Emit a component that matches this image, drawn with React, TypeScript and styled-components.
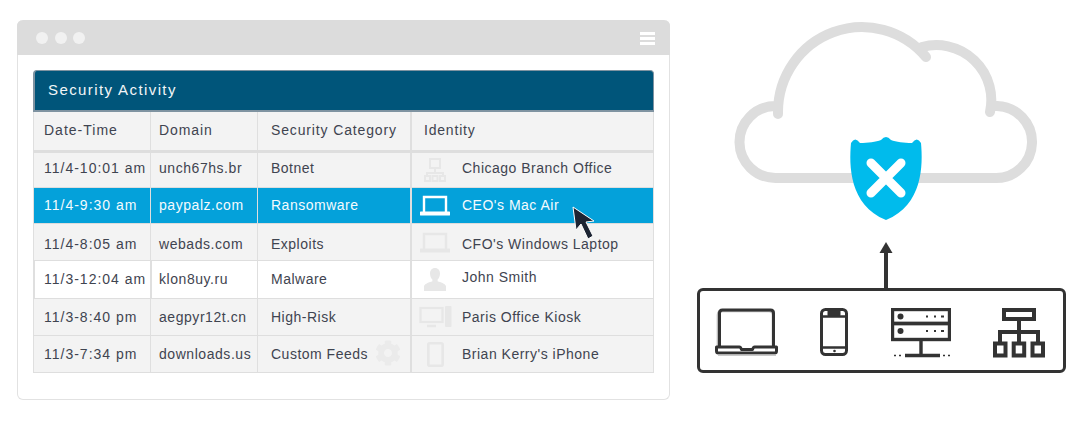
import React from 'react';
import styled, { createGlobalStyle } from 'styled-components';
import { FaCog } from 'react-icons/fa';

const GlobalStyle = createGlobalStyle`
  html, body {
    margin: 0;
    padding: 0;
    background: #fff;
    font-family: 'Liberation Sans', Arial, sans-serif;
  }
`;

type IconKind = 'network' | 'laptop' | 'person' | 'kiosk' | 'phone';

type ActivityRow = {
  time: string;
  domain: string;
  category: string;
  identity: string;
  icon: IconKind;
  height: number;
  nudge?: number;
  selected?: boolean;
  white?: boolean;
  gear?: boolean;
};

const rows: ActivityRow[] = [
  { time: '11/4-10:01 am', domain: 'unch67hs.br', category: 'Botnet', identity: 'Chicago Branch Office', icon: 'network', height: 35, nudge: -4 },
  { time: '11/4-9:30 am', domain: 'paypalz.com', category: 'Ransomware', identity: "CEO's Mac Air", icon: 'laptop', height: 36, nudge: -2, selected: true },
  { time: '11/4-8:05 am', domain: 'webads.com', category: 'Exploits', identity: "CFO's Windows Laptop", icon: 'laptop', height: 37, nudge: 3 },
  { time: '11/3-12:04 am', domain: 'klon8uy.ru', category: 'Malware', identity: 'John Smith', icon: 'person', height: 38, nudge: -2, white: true },
  { time: '11/3-8:40 pm', domain: 'aegpyr12t.cn', category: 'High-Risk', identity: 'Paris Office Kiosk', icon: 'kiosk', height: 37 },
  { time: '11/3-7:34 pm', domain: 'downloads.us', category: 'Custom Feeds', identity: "Brian Kerry's iPhone", icon: 'phone', height: 37, gear: true },
];

const Page = styled.div`
  display: flex;
  align-items: flex-start;
  width: 1083px;
  height: 424px;
  padding: 20px 0 0 17px;
  box-sizing: border-box;
  overflow: hidden;
`;

const BrowserWindow = styled.section`
  width: 653px;
  height: 380px;
  box-sizing: border-box;
  border: 1px solid #e2e2e2;
  border-top: none;
  border-radius: 6px;
  background: #fff;
`;

const TitleBar = styled.div`
  display: flex;
  align-items: center;
  height: 35px;
  margin: 0 -1px;
  padding: 0 15px 0 19px;
  background: #dcdcdc;
  border-radius: 6px 6px 0 0;
`;

const Dot = styled.span`
  width: 12px;
  height: 12px;
  margin-right: 6.5px;
  border-radius: 50%;
  background: #f1f1f1;
`;

const Burger = styled.span`
  display: flex;
  flex-direction: column;
  gap: 2px;
  margin: 2px 0 0 auto;

  i {
    width: 15px;
    height: 3px;
    background: #fff;
  }
`;

const Panel = styled.div`
  position: relative;
  width: 621px;
  margin: 15px 0 0 15px;
`;

const PanelTitle = styled.h2`
  height: 42px;
  margin: 0;
  box-sizing: border-box;
  padding: 0 0 0 13px;
  border: 2px solid #7f93a1;
  border-width: 1px 1px 2px 2px;
  border-radius: 4px 4px 0 0;
  background: #00557a;
  color: #f2f5f7;
  font-size: 15px;
  font-weight: 400;
  line-height: 38px;
  letter-spacing: 1.4px;
`;

const Row = styled.div<{ $height: number; $selected?: boolean; $white?: boolean; $head?: boolean }>`
  display: grid;
  grid-template-columns: 117px 107px 153px 244px;
  height: ${(p) => p.$height}px;
  box-sizing: border-box;
  border-bottom: ${(p) => (p.$head ? 3 : 1)}px solid ${(p) => (p.$selected ? '#dcdcdc' : '#dedede')};
  background: ${(p) => (p.$selected ? '#04a1da' : p.$white ? '#fff' : '#f3f3f3')};
  color: ${(p) => (p.$selected ? '#f4fbfe' : '#3f4450')};
  font-size: 14px;
`;

const Cell = styled.div<{ $inset: number; $thick?: boolean; $spacing: number }>`
  display: flex;
  align-items: center;
  position: relative;
  box-sizing: border-box;
  padding-left: ${(p) => p.$inset}px;
  border-left: ${(p) => (p.$thick ? 2 : 1)}px solid #dfdfdf;
  letter-spacing: ${(p) => p.$spacing}px;
  white-space: nowrap;
`;

const LastCell = styled(Cell)`
  border-right: 1px solid #dfdfdf;
`;

// a margin inside a centred flex cell moves the text by half its value
const Label = styled.span<{ $nudge?: number }>`
  margin-top: ${(p) => p.$nudge || 0}px;
`;

const IconSlot = styled.span<{ $selected?: boolean }>`
  display: flex;
  flex: none;
  justify-content: center;
  width: 46px;
  margin-right: 4px;
  color: ${(p) => (p.$selected ? '#fff' : '#e7e7e7')};
`;

const Gear = styled(FaCog)`
  position: absolute;
  right: 9px;
  top: 4px;
  color: #ebebeb;
  font-size: 26px;
`;

const Cursor = styled.svg`
  position: absolute;
  left: 539px;
  top: 136px;
`;

const Diagram = styled.div`
  display: flex;
  flex-direction: column;
  width: 369px;
  margin-left: 27px;
`;

const CloudArt = styled.svg`
  display: block;
  margin-left: 33px;
`;

const DeviceBox = styled.div`
  display: flex;
  align-items: flex-start;
  gap: 42px;
  height: 85px;
  box-sizing: border-box;
  padding: 17px 0 0 15px;
  border: 3px solid #333;
  border-radius: 6px;
  color: #333;
`;

const IdentityIcon = ({ kind }: { kind: IconKind }) => {
  if (kind === 'network') {
    return (
      <svg width="22" height="24" viewBox="0 0 22 24" fill="none" stroke="currentColor" strokeWidth="2">
        <rect x="6" y="1" width="10" height="9" />
        <path d="M11 10v5M3 18v-3h16v3" />
        <rect x="1" y="18" width="5" height="5" />
        <rect x="8.5" y="18" width="5" height="5" />
        <rect x="16" y="18" width="5" height="5" />
      </svg>
    );
  }
  if (kind === 'laptop') {
    return (
      <svg width="30" height="21" viewBox="0 0 30 21" fill="none" stroke="currentColor" strokeWidth="2.4">
        <path d="M4 17V2h22v15" />
        <path d="M1 18.5h28" strokeWidth="4" strokeLinecap="round" />
      </svg>
    );
  }
  if (kind === 'person') {
    return (
      <svg width="22" height="23" viewBox="0 0 22 23" fill="currentColor">
        <path d="M11 0c3.2 0 5 2.4 5 5.6 0 2.6-1 4.8-2.4 6v1.6c3 1 7.4 2.2 8.4 4.8V23H0v-5c1-2.6 5.4-3.8 8.4-4.8v-1.6C7 10.4 6 8.2 6 5.6 6 2.4 7.8 0 11 0z" />
      </svg>
    );
  }
  if (kind === 'kiosk') {
    return (
      <svg width="33" height="22" viewBox="0 0 33 22" fill="none" stroke="currentColor" strokeWidth="2.2">
        <rect x="1.5" y="2" width="22" height="14" />
        <path d="M8 20h9" strokeWidth="2.5" />
        <rect x="26" y="0" width="6.5" height="21" rx="1" fill="currentColor" stroke="none" />
      </svg>
    );
  }
  return (
    <svg width="17" height="25" viewBox="0 0 17 25" fill="none" stroke="currentColor" strokeWidth="2.6">
      <rect x="1.3" y="1.3" width="14.4" height="22.4" rx="1.5" />
    </svg>
  );
};

const LaptopIcon = () => (
  <svg width="63" height="48" viewBox="0 0 63 48" fill="none" stroke="currentColor">
    <path d="M4 38V6q0-4 4-4h47q4 0 4 4v32" strokeWidth="2.6" stroke="#b9b9b9" transform="translate(-1 1)" />
    <path d="M4.5 38V5q0-3 3-3h48q3 0 3 3v33" strokeWidth="3" />
    <path d="M1.5 39h23q1 0 2 2.5h11q1-2.5 2-2.5h22v4q0 2-2 2H3.5q-2 0-2-2z" strokeWidth="3" strokeLinejoin="round" />
    <path d="M3 47h58" strokeWidth="1.6" stroke="#b9b9b9" />
  </svg>
);

const PhoneIcon = () => (
  <svg width="29" height="48" viewBox="0 0 29 48" fill="none" stroke="currentColor">
    <rect x="1.5" y="1.5" width="25" height="45" rx="4" strokeWidth="3" />
    <path d="M7.5 2.5h13V7q0 2-2 2h-9q-2 0-2-2z" fill="currentColor" stroke="none" />
    <path d="M1 8.5h27M1 39.5h27" strokeWidth="2.4" />
    <circle cx="14.5" cy="43" r="1.3" fill="currentColor" stroke="none" />
  </svg>
);

const ServerIcon = () => (
  <svg width="60" height="56" viewBox="0 0 60 56" fill="none" stroke="currentColor">
    <rect x="1.5" y="1.5" width="57" height="14" strokeWidth="3.4" />
    <rect x="1.5" y="15.5" width="57" height="16" strokeWidth="3.4" />
    <circle cx="9.5" cy="8.5" r="3" fill="currentColor" stroke="none" />
    <circle cx="9.5" cy="23" r="3" fill="currentColor" stroke="none" />
    <path d="M35 8.5h2M43 8.5h2M50 8.5h3M35 23h2M43 23h2M50 23h3" strokeWidth="2" />
    <path d="M30 32v15M14 47.5h35" strokeWidth="3.4" />
    <path d="M3 47.5h2M8 47.5h2M52 47.5h2M57 47.5h2" strokeWidth="1.4" />
  </svg>
);

const NetworkIcon = () => (
  <svg width="52" height="50" viewBox="0 0 52 50" fill="none" stroke="currentColor" strokeWidth="4">
    <rect x="11" y="2" width="30" height="9" />
    <path d="M26 11v24M7 35V24h38v11" />
    <rect x="2" y="35.5" width="10.5" height="12" />
    <rect x="20.7" y="35.5" width="10.5" height="12" />
    <rect x="39.5" y="35.5" width="10.5" height="12" />
  </svg>
);

const App = () => (
  <>
    <GlobalStyle />
    <Page>
      <BrowserWindow>
        <TitleBar>
          <Dot />
          <Dot />
          <Dot />
          <Burger>
            <i />
            <i />
            <i />
          </Burger>
        </TitleBar>
        <Panel>
          <PanelTitle>Security Activity</PanelTitle>
          <Row $height={41} $head>
            <Cell $inset={10} $spacing={1}>
              <Label $nudge={-2}>Date-Time</Label>
            </Cell>
            <Cell $inset={8} $spacing={0.9}>
              <Label $nudge={-2}>Domain</Label>
            </Cell>
            <Cell $inset={13} $spacing={0.86}>
              <Label $nudge={-2}>Security Category</Label>
            </Cell>
            <LastCell $inset={12} $thick $spacing={0.8}>
              <Label $nudge={-2}>Identity</Label>
            </LastCell>
          </Row>
          {rows.map((row) => (
            <Row key={row.time} $height={row.height} $selected={row.selected} $white={row.white}>
              <Cell $inset={row.white ? 9 : 10} $thick={row.white} $spacing={1}>
                <Label $nudge={row.nudge}>{row.time}</Label>
              </Cell>
              <Cell $inset={row.white ? 7 : 8} $thick={row.white} $spacing={0.55}>
                <Label $nudge={row.nudge}>{row.domain}</Label>
              </Cell>
              <Cell $inset={13} $spacing={0.5}>
                <Label $nudge={row.nudge}>{row.category}</Label>
                {row.gear && <Gear />}
              </Cell>
              <LastCell $inset={0} $thick $spacing={0.5}>
                <IconSlot $selected={row.selected}>
                  <IdentityIcon kind={row.icon} />
                </IconSlot>
                <Label $nudge={row.white ? -6 : row.nudge}>{row.identity}</Label>
              </LastCell>
            </Row>
          ))}
          <Cursor width="26" height="40" viewBox="0 0 26 40">
            <path d="M1 1l3 23 5-6 7 15 5-3-7-14 8-1z" fill="#1d2433" stroke="#fff" strokeWidth="1" />
          </Cursor>
        </Panel>
      </BrowserWindow>
      <Diagram>
        <CloudArt width="312" height="268" viewBox="730 20 312 268" fill="none">
          <path
            d="M778 114V112A84 85 0 0 1 926 57M922 47A55 55 0 0 1 990 112M775 106A36 36 0 0 0 776 178H995A36 36 0 0 0 997 106"
            stroke="#dddddd"
            strokeWidth="10"
            strokeLinecap="round"
          />
          <path
            d="M851 143Q855 136 860 143C868 143 876 142 881 140Q886 134 891 140C896 142 904 143 912 143Q917 136 921 143C923 165 923 205 886 220C849 205 849 165 851 143Z"
            fill="#00bbec"
          />
          <path d="M871 163L901 193M901 163L871 193" stroke="#fff" strokeWidth="9" strokeLinecap="round" />
          <path d="M886 250V288" stroke="#333" strokeWidth="4" />
          <path d="M886 242L892.5 253H879.5Z" fill="#333" />
        </CloudArt>
        <DeviceBox>
          <LaptopIcon />
          <PhoneIcon />
          <ServerIcon />
          <NetworkIcon />
        </DeviceBox>
      </Diagram>
    </Page>
  </>
);

export default App;
